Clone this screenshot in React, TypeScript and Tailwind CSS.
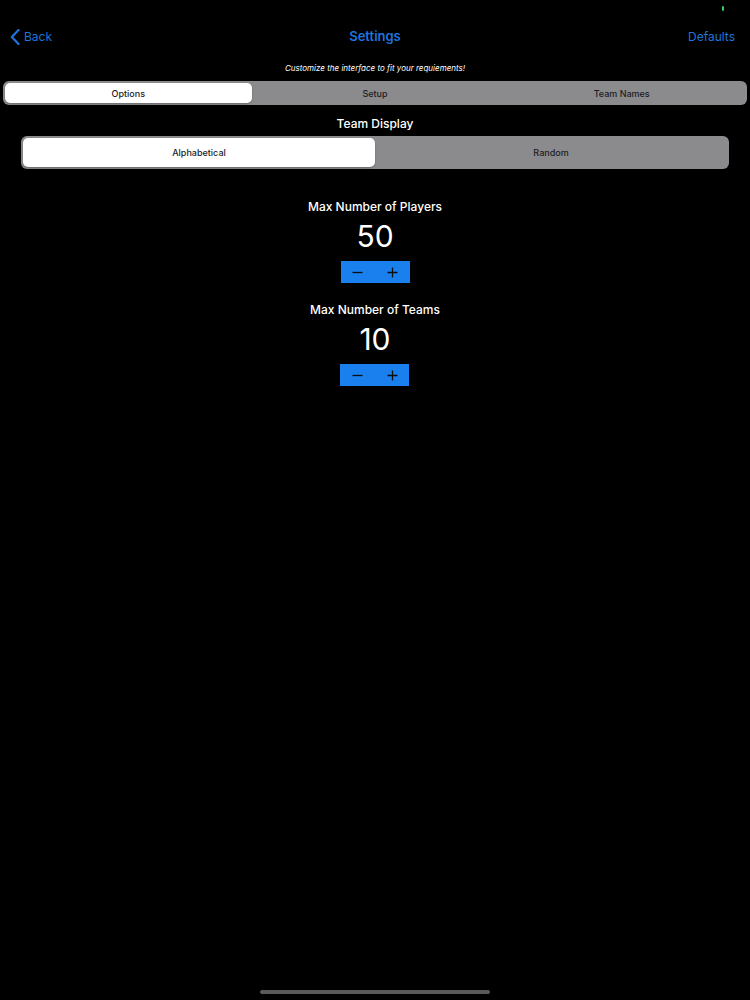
import React, { useState } from 'react';
import clsx from 'clsx';

const TABS = ['Options', 'Setup', 'Team Names'];
const DISPLAY_MODES = ['Alphabetical', 'Random'];

const BLUE_TEXT = 'text-[#1f74dc]';

interface SegmentedProps {
  items: string[];
  active: number;
  onChange: (index: number) => void;
  className?: string;
  textClass?: string;
}

function Segmented(props: SegmentedProps) {
  const { items, active, onChange, className, textClass } = props;
  return (
    <div className={clsx('flex bg-[#8b8b8d] rounded-[6px] p-[2px]', className)}>
      {items.map((item, index) => (
        <button
          key={item}
          onClick={() => onChange(index)}
          className={clsx(
            'flex-1 flex items-center justify-center rounded-[5px] text-[#1c1c1e] font-medium',
            textClass,
            active === index && 'bg-white shadow-[0_1px_2px_rgba(0,0,0,0.25)]',
          )}
        >
          {item}
        </button>
      ))}
    </div>
  );
}

interface StepperProps {
  label: string;
  value: number;
  onChange: (value: number) => void;
}

function Stepper(props: StepperProps) {
  const { label, value, onChange } = props;
  return (
    <div className="flex flex-col items-center">
      <div className="text-[12px] font-medium text-white leading-[16px]">{label}</div>
      <div className="text-[30px] text-white leading-[36px] mt-[3px]">{value}</div>
      <div className="flex w-[69px] h-[22px] bg-[#1a80ee] mt-[7px]">
        <button
          onClick={() => onChange(Math.max(0, value - 1))}
          className="flex-1 flex items-center justify-center"
        >
          <svg width="11" height="11" viewBox="0 0 11 11">
            <path d="M0.5 5.5h10" stroke="#0d0d0d" strokeWidth="1.3" />
          </svg>
        </button>
        <button
          onClick={() => onChange(value + 1)}
          className="flex-1 flex items-center justify-center"
        >
          <svg width="11" height="11" viewBox="0 0 11 11">
            <path d="M0.5 5.5h10M5.5 0.5v10" stroke="#0d0d0d" strokeWidth="1.3" />
          </svg>
        </button>
      </div>
    </div>
  );
}

export default function App() {
  const [tab, setTab] = useState(0);
  const [mode, setMode] = useState(0);
  const [players, setPlayers] = useState(50);
  const [teams, setTeams] = useState(10);

  return (
    <div className="w-[750px] h-[1000px] bg-black flex flex-col font-['Inter',sans-serif] overflow-hidden">
      {/* status bar */}
      <div className="h-[21px] flex justify-end pr-[26px] pt-[6px]">
        <div className="w-[2px] h-[5px] bg-[#2fd158] rounded-[1px]" />
      </div>

      {/* navigation bar */}
      <header className="h-[32px] grid grid-cols-3 items-center px-[10px] text-[12px]">
        <a className={clsx('flex items-center gap-[4px]', BLUE_TEXT)}>
          <svg width="10" height="16" viewBox="0 0 10 16">
            <path
              d="M8.5 1L1.8 8l6.7 7"
              fill="none"
              stroke="#1f74dc"
              strokeWidth="2.2"
              strokeLinecap="round"
              strokeLinejoin="round"
            />
          </svg>
          <span>Back</span>
        </a>
        <h1 className={clsx('text-center text-[13px] font-semibold', BLUE_TEXT)}>Settings</h1>
        <a className={clsx('text-right pr-[5px]', BLUE_TEXT)}>Defaults</a>
      </header>

      <p className="text-center text-[8px] italic text-white mt-[10px] leading-[10px]">
        Customize the interface to fit your requiements!
      </p>

      <Segmented
        items={TABS}
        active={tab}
        onChange={setTab}
        className="mx-[3px] mt-[8px] h-[24px]"
        textClass="text-[9px] pt-[1px]"
      />

      <div className="text-center text-[12px] font-medium text-white mt-[11px] leading-[16px]">
        Team Display
      </div>

      <Segmented
        items={DISPLAY_MODES}
        active={mode}
        onChange={setMode}
        className="mx-[21px] mt-[4px] h-[33px] w-[708px]"
        textClass="text-[9px]"
      />

      <div className="flex flex-col items-center gap-[19px] mt-[30px]">
        <Stepper label="Max Number of Players" value={players} onChange={setPlayers} />
        <Stepper label="Max Number of Teams" value={teams} onChange={setTeams} />
      </div>

      <div className="flex-1" />
      {/* home indicator */}
      <div className="flex justify-center pb-[6px]">
        <div className="w-[230px] h-[4px] rounded-full bg-[#5a5a5c]" />
      </div>
    </div>
  );
}
